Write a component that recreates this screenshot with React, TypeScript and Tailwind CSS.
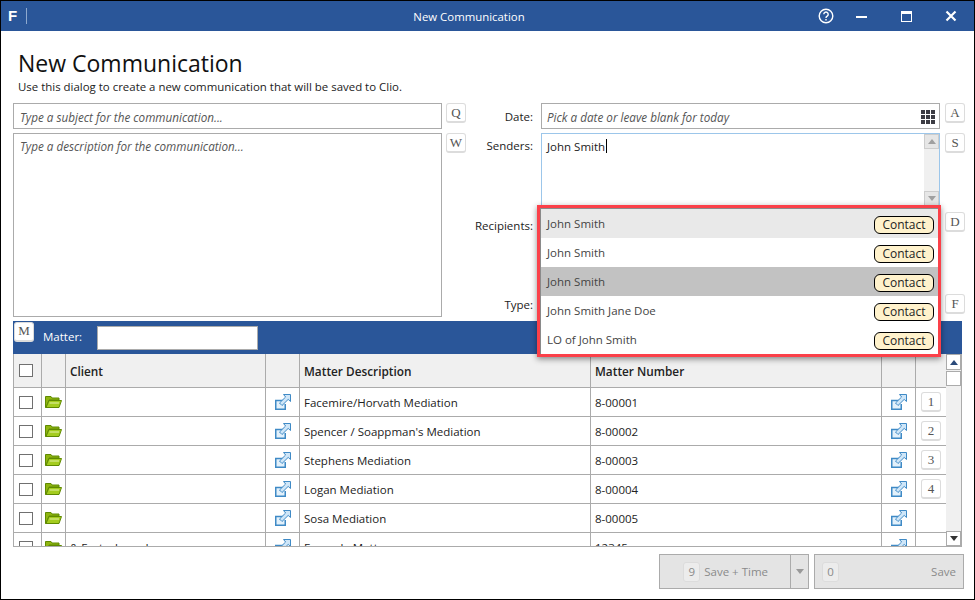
const font = "font-['Open_Sans',sans-serif]";

function KeyCap({ label, className = "" }: { label: string; className?: string }) {
  return (
    <div
      className={`flex h-[20px] w-[20px] shrink-0 items-center justify-center rounded-[3px] border border-[#dcdcdc] border-b-2 bg-white font-['Liberation_Serif',serif] text-[13px] text-[#555] ${className}`}
    >
      {label}
    </div>
  );
}

function FolderIcon() {
  return (
    <svg width="17" height="14" viewBox="0 0 17 14">
      <path d="M0.5 12.5V1.5H6L7 3H14V5H4L1 12.5Z" fill="#8fb510" stroke="#5f8a00" />
      <path d="M1 12.5L4 5.5H16.5L14 12.5Z" fill="#a4cc1e" stroke="#5f8a00" />
      <path d="M4.5 8H14" stroke="#e4f2a8" />
    </svg>
  );
}

function LinkIcon() {
  return (
    <svg width="16" height="16" viewBox="0 0 16 16">
      <path d="M9 6.5H0.75V15.25H10.25V10" fill="#e3f1fb" stroke="#3f8ac6" strokeWidth="1.5" />
      <path d="M15.5 0.5V7.5L13.2 5.4L7 11.5L4.5 9L10.6 3L8.5 0.5Z" fill="#cfe6f8" stroke="#3f8ac6" />
    </svg>
  );
}

function GridIcon() {
  return (
    <div className="grid grid-cols-3 gap-px">
      {Array.from({ length: 9 }).map((_, i) => (
        <div key={i} className="h-[4px] w-[4px] bg-[#3c3c44]" />
      ))}
    </div>
  );
}

const rows = [
  { client: "", desc: "Facemire/Horvath Mediation", num: "8-00001", key: "1" },
  { client: "", desc: "Spencer / Soappman's Mediation", num: "8-00002", key: "2" },
  { client: "", desc: "Stephens Mediation", num: "8-00003", key: "3" },
  { client: "", desc: "Logan Mediation", num: "8-00004", key: "4" },
  { client: "", desc: "Sosa Mediation", num: "8-00005", key: "" },
  { client: "& Fortech, and", desc: "Example Matter", num: "12345", key: "" },
];

const suggestions = [
  { name: "John Smith", bg: "bg-[#e9e9e9]" },
  { name: "John Smith", bg: "bg-white" },
  { name: "John Smith", bg: "bg-[#c2c2c2]" },
  { name: "John Smith Jane Doe", bg: "bg-white" },
  { name: "LO of John Smith", bg: "bg-white" },
];

const cols = "grid grid-cols-[29px_24px_200px_34px_291px_291px_34px_31px]";

export default function App() {
  return (
    <div className={`${font} relative flex h-[600px] w-[975px] flex-col border border-black bg-white text-[11.5px] leading-[16px] text-[#222]`}>
      {/* Title bar */}
      <div className="flex h-[30px] shrink-0 items-center bg-[#2a5699] text-white">
        <div className="ml-[7px] w-[11px] font-['Liberation_Sans',sans-serif] text-[15px] font-bold">F</div>
        <div className="ml-[7px] h-[16px] w-px bg-[#8ea9cf]" />
        <div className="flex-1 pl-[93px] pt-[1px] text-center text-[11.4px]">New Communication</div>
        <svg width="16" height="16" viewBox="0 0 16 16" fill="none" stroke="white" strokeWidth="1.4" className="mr-[22px]">
          <circle cx="8" cy="8" r="6.8" />
          <path d="M5.8 6.2a2.2 2.2 0 1 1 3.4 1.9c-.8.5-1.2.9-1.2 1.8" />
          <path d="M8 11v1.4" />
        </svg>
        <div className="mr-[34px] mt-[2px] h-[2px] w-[11px] bg-white" />
        <div className="mr-[33px] h-[11px] w-[11px] border border-t-[3px] border-white" />
        <svg width="12" height="12" viewBox="0 0 12 12" stroke="white" strokeWidth="2.2" className="mr-[17px]">
          <path d="M1.5 1.5L10.5 10.5M10.5 1.5L1.5 10.5" />
        </svg>
      </div>

      {/* Heading */}
      <div className="pl-[17px] pt-[16px]">
        <div className="text-[23px] leading-[32px] text-[#111]">New Communication</div>
        <div className="text-[11.45px] leading-[16px] text-[#222]">
          Use this dialog to create a new communication that will be saved to Clio.
        </div>
      </div>

      {/* Form */}
      <div className="mt-[8px] flex pl-[12px]">
        <div className="w-[453px] shrink-0">
          <div className="flex">
            <div className="flex h-[26px] w-[429px] items-center border border-[#ababab] px-[6px] pt-[1px] text-[11.7px] italic text-[#555]">
              Type a subject for the communication...
            </div>
            <KeyCap label="Q" className="ml-[4px]" />
          </div>
          <div className="mt-[4px] flex">
            <div className="h-[184px] w-[429px] border border-[#ababab] px-[6px] pt-[4px] text-[11.7px] italic text-[#555]">
              Type a description for the communication...
            </div>
            <KeyCap label="W" className="ml-[4px]" />
          </div>
        </div>

        <div className="flex-1">
          <div className="flex">
            <div className="w-[67px] pt-[6px] text-right">Date:</div>
            <div className="ml-[8px] flex h-[26px] w-[399px] items-center justify-between border border-[#ababab] pl-[5px] pr-[4px] pt-[1px] text-[11.7px] italic text-[#555]">
              Pick a date or leave blank for today
              <GridIcon />
            </div>
            <KeyCap label="A" className="ml-[5px] w-[17px]" />
          </div>
          <div className="mt-[4px] flex">
            <div className="w-[67px] pt-[5px] text-right">Senders:</div>
            <div className="ml-[8px] flex h-[74px] w-[399px] border border-[#9cc6ea]">
              <div className="flex-1 px-[5px] pt-[3px]">
                John Smith<span className="ml-px inline-block h-[14px] w-px translate-y-[2px] bg-black" />
              </div>
              <div className="flex w-[15px] flex-col justify-between bg-[#f0f0f0] text-[#a0a0a0]">
                <div className="flex h-[15px] items-center justify-center border border-[#cdcdcd] bg-[#e6e6e6]">
                  <div className="h-0 w-0 border-x-[4px] border-b-[5px] border-x-transparent border-b-[#a0a0a0]" />
                </div>
                <div className="flex h-[15px] items-center justify-center border border-[#cdcdcd] bg-[#e6e6e6]">
                  <div className="h-0 w-0 border-x-[4px] border-t-[5px] border-x-transparent border-t-[#a0a0a0]" />
                </div>
              </div>
            </div>
            <KeyCap label="S" className="ml-[5px] w-[17px]" />
          </div>
          <div className="mt-[5px] flex">
            <div className="w-[67px] pt-[6px] text-right">Recipients:</div>
            <KeyCap label="D" className="ml-[412px] w-[17px]" />
          </div>
          <div className="mt-[60px] flex">
            <div className="w-[67px] pt-[3px] text-right">Type:</div>
            <KeyCap label="F" className="ml-[412px] w-[17px]" />
          </div>
        </div>
      </div>

      {/* Matter bar */}
      <div className="ml-[12px] mt-[4px] flex h-[33px] w-[949px] shrink-0 items-center bg-[#2a5699] text-white">
        <KeyCap label="M" className="mb-[12px] ml-[1px]" />
        <div className="ml-[9px] -translate-y-[1px]">Matter:</div>
        <div className="ml-[15px] h-[24px] w-[161px] border border-[#ababab] bg-white" />
      </div>

      {/* Matter table */}
      <div className="relative ml-[12px] h-[193px] w-[949px] shrink-0 overflow-hidden border-b border-[#ababab]">
        <div className={`${cols} h-[34px] bg-[#f0f0f0] text-[11.8px] font-semibold`}>
          <div className="flex items-center justify-center border-x border-b border-[#ababab] pr-[3px]">
            <div className="h-[13px] w-[14px] border border-[#707070] bg-white" />
          </div>
          <div className="border-b border-r border-[#ababab]" />
          <div className="flex items-center border-b border-r border-[#ababab] pl-[4px]">Client</div>
          <div className="border-b border-r border-[#ababab]" />
          <div className="flex items-center border-b border-r border-[#ababab] pl-[4px]">Matter Description</div>
          <div className="flex items-center border-b border-r border-[#ababab] pl-[4px]">Matter Number</div>
          <div className="border-b border-r border-[#ababab]" />
          <div className="border-b border-r border-[#ababab]" />
        </div>
        {rows.map((row) => (
          <div key={row.num} className={`${cols} h-[29px]`}>
            <div className="flex items-center justify-center border-x border-b border-[#ababab] pr-[3px]">
              <div className="h-[13px] w-[14px] border border-[#707070] bg-white" />
            </div>
            <div className="flex items-center justify-center border-b border-r border-[#ababab]">
              <FolderIcon />
            </div>
            <div className="flex items-center border-b border-r border-[#ababab] pl-[4px] pt-[1px]">{row.client}</div>
            <div className="flex items-center justify-center border-b border-r border-[#ababab]">
              <LinkIcon />
            </div>
            <div className="flex items-center border-b border-r border-[#ababab] pl-[4px] pt-[1px]">{row.desc}</div>
            <div className="flex items-center border-b border-r border-[#ababab] pl-[4px] pt-[1px]">{row.num}</div>
            <div className="flex items-center justify-center border-b border-r border-[#ababab]">
              <LinkIcon />
            </div>
            <div className="flex items-center justify-center border-b border-r border-[#ababab]">
              {row.key && <KeyCap label={row.key} className="w-[17px]" />}
            </div>
          </div>
        ))}
        {/* Scrollbar */}
        <div className="absolute right-0 top-0 flex h-full w-[16px] flex-col justify-between border-r border-[#ababab] bg-[#f0f0f0]">
          <div>
            <div className="flex h-[16px] items-center justify-center border border-[#ababab] bg-white">
              <div className="h-0 w-0 border-x-[4px] border-b-[5px] border-x-transparent border-b-[#2a4a7a]" />
            </div>
            <div className="mt-px h-[15px] border border-[#ababab] bg-white" />
          </div>
          <div className="flex h-[15px] items-center justify-center border border-[#ababab] bg-white">
            <div className="h-0 w-0 border-x-[4px] border-t-[5px] border-x-transparent border-t-[#333]" />
          </div>
        </div>
      </div>

      {/* Footer buttons */}
      <div className="mt-[7px] flex justify-end pr-[10px] text-[#8a8a8a]">
        <div className="flex h-[35px] w-[150px] items-center border border-[#ababab] bg-[#e4e4e4]">
          <div className="flex flex-1 items-center justify-end self-stretch border-r border-[#ababab] pr-[22px]">
            <div className="mr-[4px] flex h-[20px] w-[17px] items-center justify-center rounded-[3px] border border-[#dcdcdc] bg-[#ececec]">9</div>
            Save + Time
          </div>
          <div className="flex w-[17px] justify-center">
            <div className="h-0 w-0 border-x-[4px] border-t-[5px] border-x-transparent border-t-[#999]" />
          </div>
        </div>
        <div className="ml-[5px] flex h-[35px] w-[150px] items-center justify-between border border-[#ababab] bg-[#e4e4e4] pl-[7px] pr-[7px]">
          <div className="flex h-[20px] w-[17px] items-center justify-center rounded-[3px] border border-[#dcdcdc] bg-[#ececec]">0</div>
          Save
        </div>
      </div>

      {/* Suggestions popup */}
      <div className="absolute left-[536px] top-[204px] h-[152px] w-[404px] overflow-hidden border-[3px] border-[#fb4049] shadow-[0_2px_6px_rgba(0,0,0,0.45)]">
        <div className="border-l border-t border-[#8a8a8a] bg-white">
          {suggestions.map((s, i) => (
            <div key={i} className={`flex h-[29px] items-center justify-between pl-[6px] pr-[4px] text-[#444] ${s.bg}`}>
              <span>{s.name}</span>
              <div className="flex h-[18px] w-[60px] translate-y-[1px] items-center justify-center rounded-[6px] border border-black bg-[#fff2cc] text-[12px] text-[#222]">
                Contact
              </div>
            </div>
          ))}
        </div>
      </div>
    </div>
  );
}
